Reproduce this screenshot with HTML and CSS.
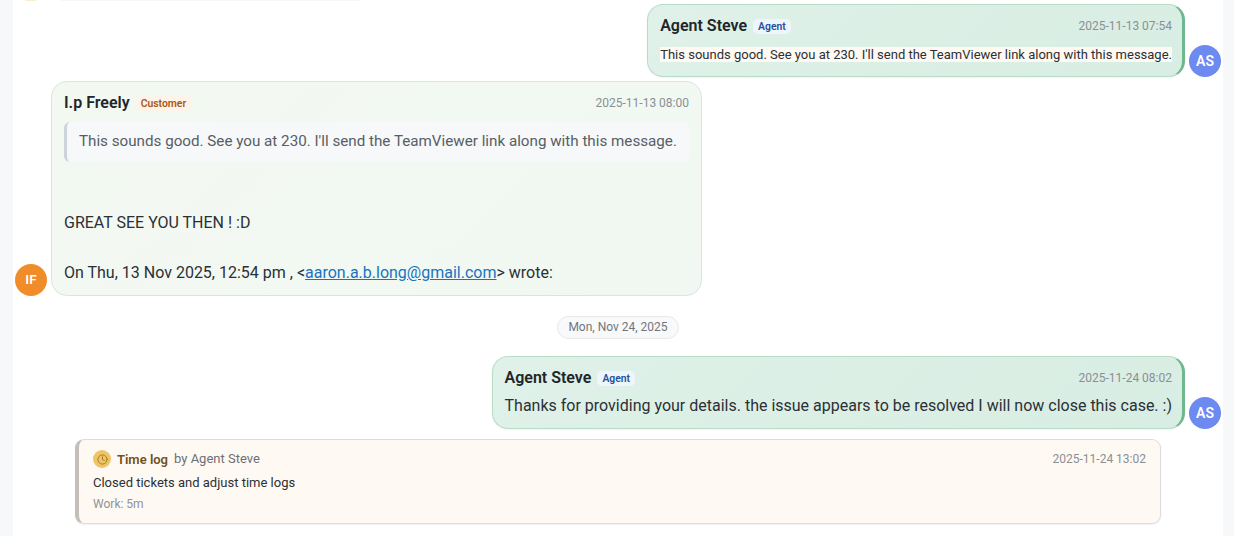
FILE: index.html
```html
<!DOCTYPE html>
<html lang="en">
<head>
<meta charset="utf-8">
<title>Ticket conversation</title>
<link rel="stylesheet" href="styles.css">
</head>
<body>
<main class="panel">
  <div class="sliver"><span class="sliver-dot"></span><span class="sliver-card"></span></div>

  <div class="row row-agent first">
    <article class="bubble bubble-agent">
      <header class="head">
        <div class="who"><span class="name">Agent Steve</span><span class="role role-agent">Agent</span></div>
        <time class="stamp">2025-11-13 07:54</time>
      </header>
      <p class="small-text"><span class="marked">This sounds good. See you at 230. I'll send the TeamViewer link along with this message.</span></p>
    </article>
    <div class="avatar avatar-agent">AS</div>
  </div>

  <div class="row row-customer">
    <div class="avatar avatar-customer">IF</div>
    <article class="bubble bubble-customer">
      <header class="head">
        <div class="who"><span class="name">I.p Freely</span><span class="role role-customer">Customer</span></div>
        <time class="stamp">2025-11-13 08:00</time>
      </header>
      <blockquote class="quote">This sounds good. See you at 230. I'll send the TeamViewer link along with this message.</blockquote>
      <p class="body-line great">GREAT SEE YOU THEN ! :D</p>
      <p class="body-line wrote">On Thu, 13 Nov 2025, 12:54 pm , &lt;<a href="#" class="mail">aaron.a.b.long@gmail.com</a>&gt; wrote:</p>
    </article>
  </div>

  <div class="date-wrap"><span class="date-pill">Mon, Nov 24, 2025</span></div>

  <div class="row row-agent">
    <article class="bubble bubble-agent">
      <header class="head">
        <div class="who"><span class="name">Agent Steve</span><span class="role role-agent">Agent</span></div>
        <time class="stamp">2025-11-24 08:02</time>
      </header>
      <p class="body-line">Thanks for providing your details. the issue appears to be resolved I will now close this case. :)</p>
    </article>
    <div class="avatar avatar-agent">AS</div>
  </div>

  <section class="timelog">
    <header class="log-head">
      <div class="log-who">
        <span class="clock">
          <svg viewBox="0 0 24 24" width="11" height="11" fill="none" stroke="#a8741a" stroke-width="2" stroke-linecap="round" stroke-linejoin="round"><circle cx="12" cy="12" r="10"/><path d="M12 6v6l4 2"/></svg>
        </span>
        <span class="log-title">Time log</span>
        <span class="log-by">by Agent Steve</span>
      </div>
      <time class="stamp">2025-11-24 13:02</time>
    </header>
    <p class="log-text">Closed tickets and adjust time logs</p>
    <p class="log-work">Work: 5m</p>
  </section>
</main>
</body>
</html>
```
FILE: styles.css
```css
* { box-sizing: border-box; }
html, body { margin: 0; height: 536px; overflow: hidden; }
body {
  background: #f6f8fa;
  font-family: Roboto, "Liberation Sans", sans-serif;
  color: #2b3035;
}
.panel {
  position: relative;
  margin: 0 11px 0 13px;
  height: 536px;
  padding: 4px 2px 0;
  background: #fff;
  display: flex;
  flex-direction: column;
}
.sliver { position: absolute; top: 0; left: 12px; display: flex; gap: 24px; }
.sliver-dot { width: 11px; height: 1px; background: #fbeecb; }
.sliver-card { width: 300px; height: 1px; background: #f8f8f6; }

.row { display: flex; align-items: flex-end; gap: 4px; }
.row-agent { justify-content: flex-end; }
.row-customer { margin-top: 4px; }

.avatar {
  flex: none;
  width: 32px;
  height: 32px;
  padding-bottom: 1px;
  border-radius: 50%;
  display: flex;
  align-items: center;
  justify-content: center;
  color: #fff;
  font-size: 14px;
  font-weight: 600;
}
.avatar-agent { background: #6c8af0; }
.avatar-customer { background: #f08c2a; padding-bottom: 3px; font-size: 13.5px; }

.bubble { border-radius: 16px; padding: 11px 12px 10px; }
.bubble-agent {
  background: linear-gradient(135deg, #dff1e8, #d8ede3);
  border: 1px solid #b9dcc9;
  border-right: 3px solid #6fb78f;
  box-shadow: 0 1px 2px rgba(0, 0, 0, .05);
  padding-right: 10px;
}
.bubble-customer {
  width: 651px;
  background: linear-gradient(135deg, #f3f9f1, #f1f8f3);
  border: 1px solid #d8e6dc;
}

.head { display: flex; justify-content: space-between; align-items: center; height: 19px; }
.who { display: flex; align-items: center; gap: 6px; }
.name { font-size: 16px; font-weight: 600; color: #212529; }
.role { font-size: 10.4px; font-weight: 600; padding: 1px 5px; margin-top: 1px; border-radius: 5px; line-height: 13px; }
.role-agent { color: #27509b; background: #eef5fc; }
.role-customer { color: #a8581a; background: #fdf3e8; }
.stamp { font-size: 12px; color: #8a8f94; }

.small-text { margin: 11px 0 2px; font-size: 13px; line-height: 18px; color: #2b3035; }
.marked { background: #fef9f2; }

.quote {
  margin: 10px 0 0;
  padding: 9px 12px;
  height: 40px;
  font-size: 15.2px;
  line-height: 20px;
  color: #585e64;
  background: #f6f8fa;
  border-left: 3px solid #ccd3da;
  border-radius: 6px;
}
.body-line { margin: 7px 0 0; font-size: 16px; line-height: 24px; color: #2b3035; }
.great { margin-top: 49px; }
.wrote { margin-top: 26px; }
.mail { color: #1a73c0; text-decoration: underline; }

.date-wrap { display: flex; justify-content: center; margin: 20px 0 17px; }
.date-pill {
  font-size: 12px;
  line-height: 21px;
  padding: 0 10px;
  color: #70767c;
  background: #f8f9fa;
  border: 1px solid #e6e8eb;
  border-radius: 12px;
}

.timelog {
  margin: 10px 0 0 60px;
  width: 1086px;
  height: 85px;
  padding: 10px 14px 0 14px;
  background: #fff9f3;
  border: 1px solid #dcdcdc;
  border-left: 4px solid #c4bfb8;
  border-radius: 9px;
  box-shadow: 0 1px 2px rgba(0, 0, 0, .06);
}
.log-head { display: flex; justify-content: space-between; align-items: center; }
.log-who { display: flex; align-items: center; }
.clock {
  width: 18px;
  height: 18px;
  border-radius: 50%;
  background: #edc466;
  display: flex;
  align-items: center;
  justify-content: center;
  margin-right: 6px;
}
.log-title { font-size: 13px; font-weight: 600; color: #6e5220; margin-right: 6px; }
.log-by { font-size: 13px; color: #6c7075; margin-top: -1px; }
.log-text { margin: 7px 0 0; font-size: 13px; line-height: 16px; color: #2b3035; }
.log-work { margin: 6px 0 0; font-size: 12px; line-height: 15px; color: #8f9398; }
```
